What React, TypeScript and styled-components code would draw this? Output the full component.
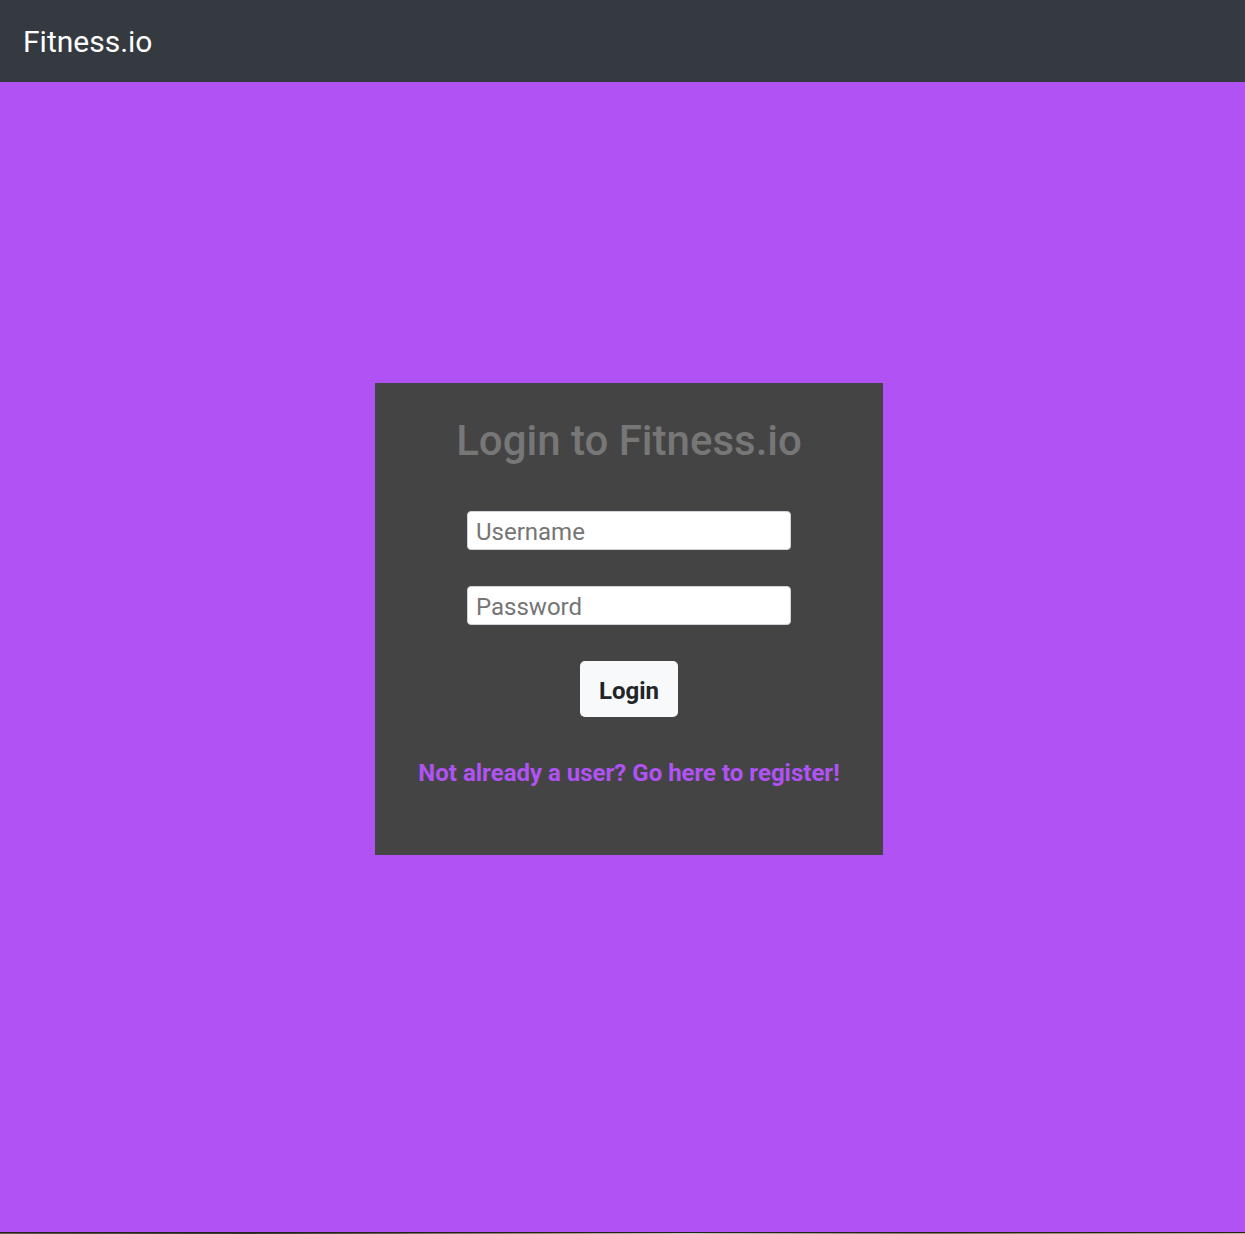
import React from "react";
import styled, { createGlobalStyle } from "styled-components";

const Global = createGlobalStyle`
  html, body { margin: 0; padding: 0; }
  body { font-family: Roboto, "Noto Sans", sans-serif; background: #b052f4; }
  * { box-sizing: border-box; }
`;

const Page = styled.div`
  display: flex;
  flex-direction: column;
  height: 1234px;
`;

const NavBar = styled.nav`
  height: 82px;
  background: #343a40;
  display: flex;
  align-items: center;
  padding-left: 23px;
`;

const Brand = styled.span`
  color: #ffffff;
  font-size: 30px;
  font-weight: 400;
`;

const Main = styled.main`
  flex: 1;
  background: #b052f4;
  display: flex;
  justify-content: center;
  align-items: flex-start;
  padding-top: 301px;
  padding-left: 13px;
`;

const Bottom = styled.div`
  height: 2px;
  border-top: 1px solid #222;
  background: linear-gradient(90deg, #6a5a48, #3a3530 20%, #b09070 45%, #cfc6bb 55%, #8a7050 75%, #d0b090);
`;

const Card = styled.div`
  width: 508px;
  height: 472px;
  background: #444444;
  display: flex;
  flex-direction: column;
  align-items: center;
  padding-top: 33px;
`;

const Title = styled.h1`
  margin: 0;
  font-size: 42px;
  font-weight: 500;
  color: #777777;
  line-height: 50px;
`;

const Form = styled.form`
  display: flex;
  flex-direction: column;
  align-items: center;
  margin-top: 45px;
`;

const Input = styled.input<{ $gap: number }>`
  width: 324px;
  height: 39px;
  border: 1px solid #ced4da;
  border-radius: 4px;
  background: #fff;
  font-family: Roboto, sans-serif;
  font-size: 24px;
  padding: 2px 8px 0;
  color: #333;
  margin-bottom: ${(p) => p.$gap}px;
  &::placeholder { color: #757575; }
`;

const Button = styled.button`
  width: 98px;
  height: 56px;
  border: none;
  border-radius: 5px;
  background: #f8f9fa;
  color: #212529;
  font-family: Roboto, sans-serif;
  font-weight: 700;
  font-size: 24px;
  padding: 4px 0 0;
  cursor: pointer;
`;

const RegisterLink = styled.a`
  margin-top: 41px;
  color: #b052f4;
  font-weight: 700;
  font-size: 24px;
  line-height: 30px;
  text-decoration: none;
`;

export default function App() {
  return (
    <Page>
      <Global />
      <NavBar>
        <Brand>Fitness.io</Brand>
      </NavBar>
      <Main>
        <Card>
          <Title>Login to Fitness.io</Title>
          <Form onSubmit={(e) => e.preventDefault()}>
            <Input $gap={36} placeholder="Username" />
            <Input $gap={36} type="password" placeholder="Password" />
            <Button type="submit">Login</Button>
          </Form>
          <RegisterLink href="#">Not already a user? Go here to register!</RegisterLink>
        </Card>
      </Main>
      <Bottom />
    </Page>
  );
}
